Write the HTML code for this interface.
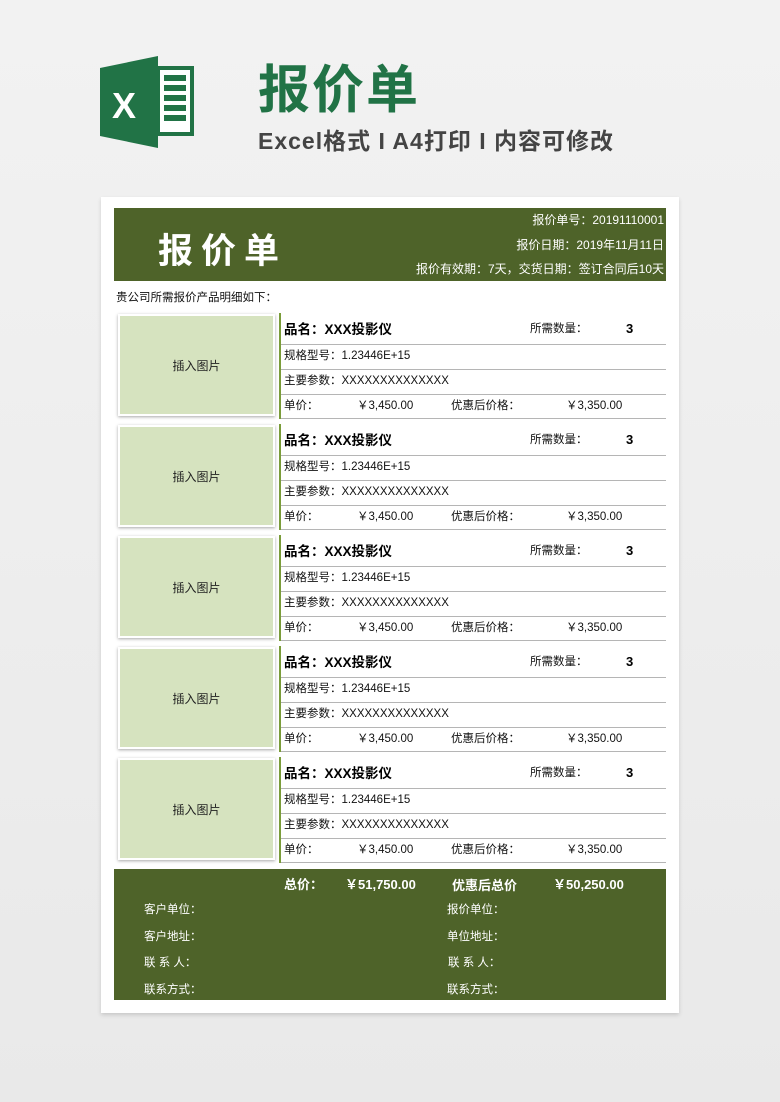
<!DOCTYPE html>
<html><head><meta charset="utf-8"><style>
*{margin:0;padding:0;box-sizing:border-box}
body{width:780px;height:1102px;background:linear-gradient(#f2f2f2,#e9e9e9);position:relative;overflow:hidden;font-family:"Liberation Sans","Noto Sans CJK SC",sans-serif}
.a{position:absolute;white-space:nowrap}
.paper{position:absolute;left:101px;top:197px;width:578px;height:816px;background:#fff;box-shadow:0 2px 4px rgba(0,0,0,.15)}
.g{background:#4e6329}
.w{color:#fff}
.img{position:absolute;left:118px;width:157px;height:102px;background:#d6e3bf;border:2px solid #fff;box-shadow:0 1px 3px rgba(0,0,0,.35);font-size:12px;color:#222;display:flex;align-items:center;justify-content:center}
.vl{position:absolute;left:279px;width:2px;height:106px;background:#7a9c3a}
.hl{position:absolute;left:281px;width:385px;height:1px;background:#b5b5b5}
.t{font-size:11.5px;color:#111}
</style></head><body>
<svg class="a" style="left:100px;top:56px" width="98" height="92" viewBox="0 0 98 92">
<path d="M0 12 L58 0 L58 92 L0 80 Z" fill="#217346"/>
<rect x="58" y="10" width="36" height="70" fill="#217346"/>
<rect x="60" y="14" width="30" height="62" fill="#fff"/>
<g fill="#217346"><rect x="64" y="19" width="22" height="6"/><rect x="64" y="29" width="22" height="6"/><rect x="64" y="39" width="22" height="6"/><rect x="64" y="49" width="22" height="6"/><rect x="64" y="59" width="22" height="6"/></g>
<text x="12" y="62" fill="#fff" font-family="Liberation Sans" font-weight="bold" font-size="36">X</text>
</svg>
<div class="a" style="left:258px;top:48px;font-size:52px;font-weight:bold;color:#217346;letter-spacing:2px">报价单</div>
<div class="a" style="left:258px;top:122px;font-size:23px;font-weight:bold;color:#444;letter-spacing:1px">Excel格式 I A4打印 I 内容可修改</div>
<div class="paper"></div>
<div class="a g" style="left:114px;top:208px;width:552px;height:73px"></div>
<div class="a w" style="left:158px;top:223px;font-size:35px;font-weight:bold;letter-spacing:8px">报价单</div>
<div class="a w" style="right:116px;top:211px;font-size:12px">报价单号：20191110001</div>
<div class="a w" style="right:116px;top:236px;font-size:12px">报价日期：2019年11月11日</div>
<div class="a w" style="right:116px;top:260px;font-size:12px">报价有效期：7天，交货日期：签订合同后10天</div>
<div class="a t" style="left:116px;top:289px">贵公司所需报价产品明细如下：</div>
<div id="p"></div>
<script>
var h='';
for(var k=0;k<5;k++){var T=313+111*k;
h+='<div class="img" style="top:'+(T+1)+'px">插入图片</div>';
h+='<div class="vl" style="top:'+T+'px"></div>';
h+='<div class="hl" style="top:'+(T+31)+'px"></div><div class="hl" style="top:'+(T+56)+'px"></div><div class="hl" style="top:'+(T+81)+'px"></div><div class="hl" style="top:'+(T+105)+'px"></div>';
h+='<div class="a" style="left:284px;top:'+(T+5)+'px;font-size:13.5px;font-weight:bold">品名：XXX投影仪</div>';
h+='<div class="a t" style="left:530px;top:'+(T+7)+'px">所需数量：</div>';
h+='<div class="a" style="left:626px;top:'+(T+8)+'px;font-size:13px;font-weight:bold">3</div>';
h+='<div class="a t" style="left:284px;top:'+(T+34)+'px">规格型号：1.23446E+15</div>';
h+='<div class="a t" style="left:284px;top:'+(T+59)+'px">主要参数：XXXXXXXXXXXXXX</div>';
h+='<div class="a t" style="left:284px;top:'+(T+84)+'px">单价：</div>';
h+='<div class="a t" style="left:357px;top:'+(T+84)+'px">￥3,450.00</div>';
h+='<div class="a t" style="left:451px;top:'+(T+84)+'px">优惠后价格：</div>';
h+='<div class="a t" style="left:566px;top:'+(T+84)+'px">￥3,350.00</div>';}
document.getElementById('p').outerHTML=h;
</script>
<div class="a g" style="left:114px;top:869px;width:552px;height:131px"></div>
<div class="a w" style="left:284px;top:874px;font-size:13px;font-weight:bold">总价：</div>
<div class="a w" style="left:345px;top:874px;font-size:13px;font-weight:bold">￥51,750.00</div>
<div class="a w" style="left:452px;top:875px;font-size:13px;font-weight:bold">优惠后总价</div>
<div class="a w" style="left:553px;top:874px;font-size:13px;font-weight:bold">￥50,250.00</div>
<div class="a w" style="left:144px;top:901px;font-size:11.5px">客户单位：</div>
<div class="a w" style="left:144px;top:928px;font-size:11.5px">客户地址：</div>
<div class="a w" style="left:144px;top:954px;font-size:11.5px">联 系 人：</div>
<div class="a w" style="left:144px;top:981px;font-size:11.5px">联系方式：</div>
<div class="a w" style="left:447px;top:901px;font-size:11.5px">报价单位：</div>
<div class="a w" style="left:447px;top:928px;font-size:11.5px">单位地址：</div>
<div class="a w" style="left:448px;top:954px;font-size:11.5px">联 系 人：</div>
<div class="a w" style="left:447px;top:981px;font-size:11.5px">联系方式：</div>
</body></html>
